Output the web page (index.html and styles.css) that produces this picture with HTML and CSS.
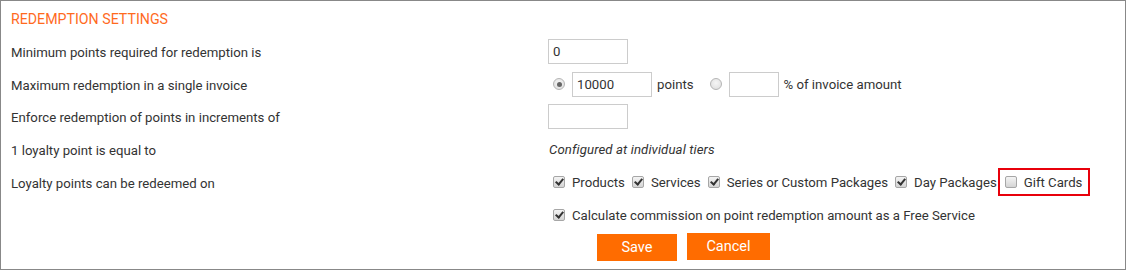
FILE: index.html
```html
<!DOCTYPE html>
<html>
<head>
<meta charset="utf-8">
<link rel="stylesheet" href="styles.css">
</head>
<body>
<div class="panel">
  <div class="title">REDEMPTION SETTINGS</div>
  <div class="rows">
    <div class="label">Minimum points required for redemption is</div>
    <div class="field"><input class="txt" type="text" value="0"></div>

    <div class="label">Maximum redemption in a single invoice</div>
    <div class="field">
      <input class="radio" type="radio" name="max" checked>
      <input class="txt" type="text" value="10000">
      <span class="after">points</span>
      <input class="radio r2" type="radio" name="max">
      <input class="txt small" type="text" value="">
      <span class="after">% of invoice amount</span>
    </div>

    <div class="label">Enforce redemption of points in increments of</div>
    <div class="field"><input class="txt" type="text" value=""></div>

    <div class="label">1 loyalty point is equal to</div>
    <div class="field"><span class="note">Configured at individual tiers</span></div>

    <div class="label">Loyalty points can be redeemed on</div>
    <div class="field">
      <label class="opt"><input class="cb" type="checkbox" checked><span>Products</span></label>
      <label class="opt"><input class="cb" type="checkbox" checked><span>Services</span></label>
      <label class="opt"><input class="cb" type="checkbox" checked><span>Series or Custom Packages</span></label>
      <label class="opt"><input class="cb" type="checkbox" checked><span>Day Packages</span></label>
      <label class="opt hl"><input class="cb" type="checkbox"><span>Gift Cards</span></label>
    </div>

    <div class="label"></div>
    <div class="field">
      <label class="opt"><input class="cb" type="checkbox" checked><span>Calculate commission on point redemption amount as a Free Service</span></label>
    </div>
  </div>
  <div class="actions">
    <button class="btn save">Save</button>
    <button class="btn cancel">Cancel</button>
  </div>
</div>
</body>
</html>
```

FILE: styles.css
```css
* { box-sizing: border-box; }
html, body { margin: 0; padding: 0; background: #fff; }
body {
  font-family: Roboto, "Liberation Sans", Arial, sans-serif;
  font-size: 13.2px;
  color: #333;
}
.panel {
  width: 1126px;
  height: 270px;
  border: 1px solid #888;
  padding: 8px 10px 0 10px;
}
.title {
  font-size: 14.2px;
  line-height: 20px;
  color: #ff6a1e;
  margin-bottom: 6px;
}
.rows {
  display: grid;
  grid-template-columns: 537px 1fr;
  grid-auto-rows: 32.7px;
  align-items: center;
}
.label { line-height: 16px; padding-top: 3px; }
.field {
  display: flex;
  align-items: center;
  height: 100%;
}
.field span { padding-top: 1px; }
.txt {
  width: 80px;
  height: 25px;
  border: 1px solid #ccc;
  padding: 0 4px;
  margin: 0;
  font-family: inherit;
  font-size: 13.2px;
  color: #333;
  outline: none;
  border-radius: 0;
}
.txt.small { width: 50px; }
.after { margin-left: 5px; }
.radio {
  -webkit-appearance: none;
  appearance: none;
  width: 12px;
  height: 12px;
  margin: 0 7px 0 5px;
  border-radius: 50%;
  border: 1px solid #b5b5b5;
  background: radial-gradient(circle at 50% 40%, #f6f6f6 0%, #dcdcdc 100%);
  position: relative;
  flex: none;
}
.radio:checked::after {
  content: "";
  position: absolute;
  left: 2.5px;
  top: 2.5px;
  width: 5px;
  height: 5px;
  border-radius: 50%;
  background: #666;
}
.radio.r2 { margin-left: 16px; }
.note { font-style: italic; margin-left: 1px; letter-spacing: 0.1px; }
.opt {
  display: inline-flex;
  align-items: center;
  margin-right: 7px;
}
.cb {
  -webkit-appearance: none;
  appearance: none;
  width: 12px;
  height: 12px;
  margin: 0 7px 0 0;
  border: 1px solid #a6a6a6;
  border-radius: 2px;
  background: linear-gradient(#f4f4f4, #d4d4d4);
  position: relative;
  flex: none;
}
.field > .opt:first-child .cb { margin-left: 5px; }
.cb:checked::after {
  content: "";
  position: absolute;
  left: 3px;
  top: 0px;
  width: 3px;
  height: 6px;
  border-right: 2px solid #333;
  border-bottom: 2px solid #333;
  transform: rotate(40deg);
}
.opt.hl {
  margin-left: -6px;
  height: 28px;
  border: 2px solid #e8000b;
  padding: 0 6px 0 5px;
  margin-right: 0;
}
.actions {
  display: flex;
  align-items: flex-start;
  gap: 10px;
  margin-top: 2px;
  padding-left: 586px;
}
.btn {
  border: none;
  margin: 0;
  padding: 0;
  height: 27px;
  background: #ff6c00;
  color: #fff;
  font-family: inherit;
  font-size: 14.5px;
  border-radius: 0;
}
.save { width: 80px; margin-top: 1px; }
.cancel { width: 83px; }
```
